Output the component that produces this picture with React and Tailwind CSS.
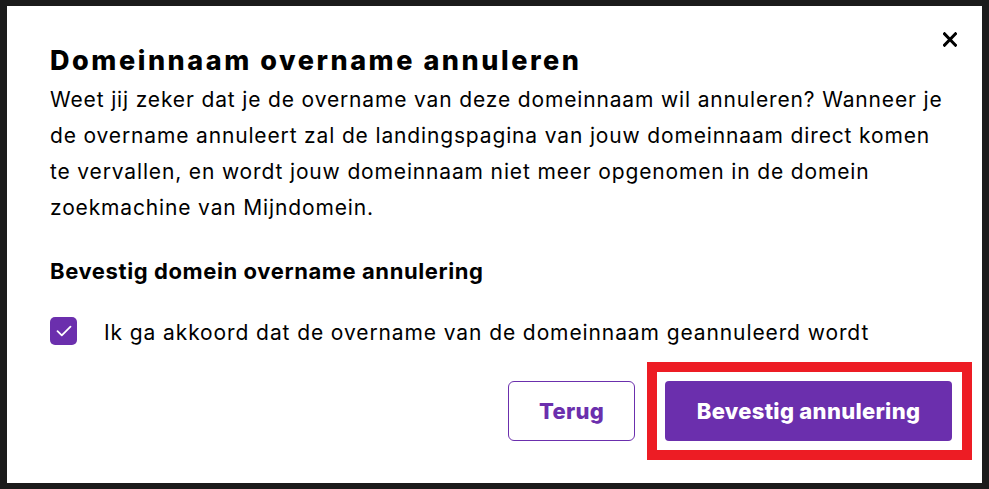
const PURPLE = "#6b2fad";

// Small check glyph for the confirmed checkbox
const CheckMark = () => (
  <svg width="16" height="12" viewBox="0 0 16 12" fill="none">
    <path d="M1.5 6.2 5.8 10.3 14.5 1.7" stroke="white" strokeWidth="1.8" strokeLinecap="round" strokeLinejoin="round" />
  </svg>
);

const CloseIcon = () => (
  <svg width="14" height="15" viewBox="0 0 14 15" fill="none">
    <path d="M1.5 1.8 12.5 13.2M12.5 1.8 1.5 13.2" stroke="black" strokeWidth="3" strokeLinecap="square" />
  </svg>
);

export default function App() {
  return (
    <div className="h-[489px] w-[989px] bg-[#1b1b1b] px-[7px] py-[6px] font-['Inter',sans-serif] text-black">
      <div className="relative h-full bg-white pl-[43px] pt-[38px]">
        <button className="absolute left-[936px] top-[26px]" aria-label="Sluiten">
          <CloseIcon />
        </button>

        <h2 className="text-[27px] font-extrabold leading-[34px] tracking-[2.55px]">Domeinnaam overname annuleren</h2>
        <p className="mt-[4px] text-[21px] leading-[36px] tracking-[0.85px]">
          Weet jij zeker dat je de overname van deze domeinnaam wil annuleren? Wanneer je
          <br />
          de overname annuleert zal de landingspagina van jouw domeinnaam direct komen
          <br />
          te vervallen, en wordt jouw domeinnaam niet meer opgenomen in de domein
          <br />
          zoekmachine van Mijndomein.
        </p>

        <h3 className="mt-[31px] text-[22px] font-bold leading-[28px] tracking-[0.6px]">Bevestig domein overname annulering</h3>

        <label className="mt-[30px] flex items-center">
          <span className="flex h-[28px] w-[27px] items-center justify-center rounded-[5px]" style={{ backgroundColor: PURPLE }}>
            <CheckMark />
          </span>
          <span className="ml-[27px] mt-[4px] text-[21px] leading-[28px] tracking-[0.9px]">
            Ik ga akkoord dat de overname van de domeinnaam geannuleerd wordt
          </span>
        </label>

        <div className="mt-[15px] flex items-center justify-end pr-[10px]">
          <button className="h-[60px] w-[127px] rounded-[6px] border border-[#6b2fad] text-[22px] font-extrabold tracking-[0.3px] text-[#6b2fad]">
            Terug
          </button>
          <div className="ml-[12px] border-[10px] border-[#ed1c24] py-[9px] pl-[8px] pr-[10px]">
            <button className="h-[60px] w-[287px] rounded-[4px] bg-[#6b2fad] text-[22px] font-extrabold tracking-[0.3px] text-white">
              Bevestig annulering
            </button>
          </div>
        </div>
      </div>
    </div>
  );
}
